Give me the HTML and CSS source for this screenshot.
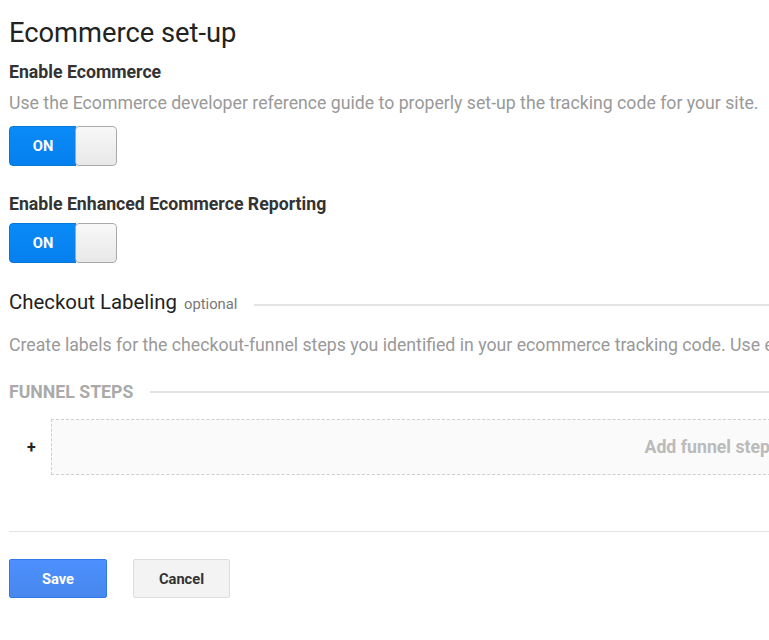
FILE: index.html
```html
<!DOCTYPE html>
<html lang="en">
<head>
    <meta charset="UTF-8">
    <title>Ecommerce set-up</title>
    <link rel="stylesheet" href="styles.css">
</head>
<body>
    <div id="settings">
        <h1>Ecommerce set-up</h1>

        <div class="field">
            <h3>Enable Ecommerce</h3>
            <p class="hint">Use the Ecommerce developer reference guide to properly set-up the tracking code for your site.</p>
            <div class="toggle">
                <span class="toggle-on">ON</span>
                <span class="toggle-knob"></span>
            </div>
        </div>

        <div class="field enhanced">
            <h3>Enable Enhanced Ecommerce Reporting</h3>
            <div class="toggle">
                <span class="toggle-on">ON</span>
                <span class="toggle-knob"></span>
            </div>
        </div>

        <div class="section-title">
            <h2>Checkout Labeling <span class="optional">optional</span></h2>
            <span class="rule"></span>
        </div>
        <p class="hint labels-hint">Create labels for the checkout-funnel steps you identified in your ecommerce tracking code. Use easy-to-understand names as these will appear in your reports.</p>

        <div class="funnel-title">
            <h4>FUNNEL STEPS</h4>
            <span class="rule"></span>
        </div>
        <div class="funnel">
            <span class="plus">+</span>
            <div class="funnel-box">Add funnel step</div>
        </div>

        <div class="actions">
            <button class="btn btn-save">Save</button>
            <button class="btn btn-cancel">Cancel</button>
        </div>
    </div>
</body>
</html>
```

FILE: styles.css
```css
html, body {
    margin: 0;
    padding: 0;
    overflow: hidden;
    background: #fff;
}
body {
    font-family: Roboto, "Open Sans", Arial, sans-serif;
    color: #222;
}
#settings {
    width: 1100px;
    padding: 18px 0 0 9px;
}
h1 {
    margin: 0;
    font-size: 27.3px;
    line-height: 30px;
    font-weight: 400;
    color: #222;
}
h3 {
    margin: 0;
    font-size: 17.7px;
    line-height: 20px;
    font-weight: 700;
    color: #333;
}
.field {
    margin-top: 14px;
}
.field.enhanced {
    margin-top: 28px;
}
.field.enhanced .toggle {
    margin-top: 9px;
}
.hint {
    margin: 11px 0 0;
    font-size: 17.7px;
    line-height: 20px;
    color: #999;
    white-space: nowrap;
}
.toggle {
    display: flex;
    width: 108px;
    height: 40px;
    margin-top: 13px;
    border-radius: 4px;
    overflow: hidden;
}
.toggle-on {
    width: 67px;
    background: linear-gradient(#0a8bf7, #0580ee);
    border: 1px solid #0878d8;
    border-right: none;
    border-radius: 4px 0 0 4px;
    color: #fff;
    font-size: 14.7px;
    font-weight: 700;
    display: flex;
    align-items: center;
    justify-content: center;
    box-sizing: border-box;
}
.toggle-knob {
    flex: 1;
    background: linear-gradient(#f8f8f8, #e8e8e8);
    border: 1px solid #a9a9a9;
    border-radius: 4px;
    box-sizing: border-box;
    margin-left: -1px;
}
.section-title, .funnel-title {
    display: flex;
    align-items: center;
}
.section-title {
    margin-top: 27px;
}
h2 {
    margin: 0;
    font-size: 20.4px;
    line-height: 24px;
    font-weight: 400;
    color: #222;
    white-space: nowrap;
}
.optional {
    font-size: 14.8px;
    color: #777;
    margin-left: 2px;
}
.rule {
    flex: 1;
    height: 2px;
    background: #e3e3e3;
}
.section-title .rule {
    margin-left: 17px;
    margin-top: 4px;
}
.labels-hint {
    margin-top: 19px;
}
.funnel-title {
    margin-top: 27px;
}
h4 {
    margin: 0;
    font-size: 17.7px;
    line-height: 20px;
    font-weight: 700;
    color: #aaa;
}
.funnel-title .rule {
    margin-left: 17px;
}
.funnel {
    display: flex;
    align-items: center;
    margin-top: 17px;
}
.plus {
    width: 42px;
    padding-left: 18px;
    box-sizing: border-box;
    font-size: 16px;
    font-weight: 700;
    color: #222;
}
.funnel-box {
    width: 730px;
    height: 56px;
    box-sizing: border-box;
    border: 1px dashed #cfcfcf;
    background: #fafafa;
    color: #bbb;
    font-size: 17.7px;
    font-weight: 700;
    display: flex;
    align-items: center;
    justify-content: flex-end;
    padding-right: 10px;
}
.actions {
    margin-top: 56px;
    padding-top: 27px;
    border-top: 1px solid #e3e3e3;
    display: flex;
    gap: 26px;
}
.btn {
    width: 97px;
    height: 39px;
    font-family: Roboto, Arial, sans-serif;
    font-size: 14.7px;
    font-weight: 700;
    border-radius: 2px;
    cursor: pointer;
}
.btn-save {
    width: 98px;
    color: #fff;
    background: linear-gradient(#4d90fe, #4787ed);
    border: 1px solid #3079ed;
}
.btn-cancel {
    color: #333;
    background: #f3f3f3;
    border: 1px solid #dcdcdc;
}
```
